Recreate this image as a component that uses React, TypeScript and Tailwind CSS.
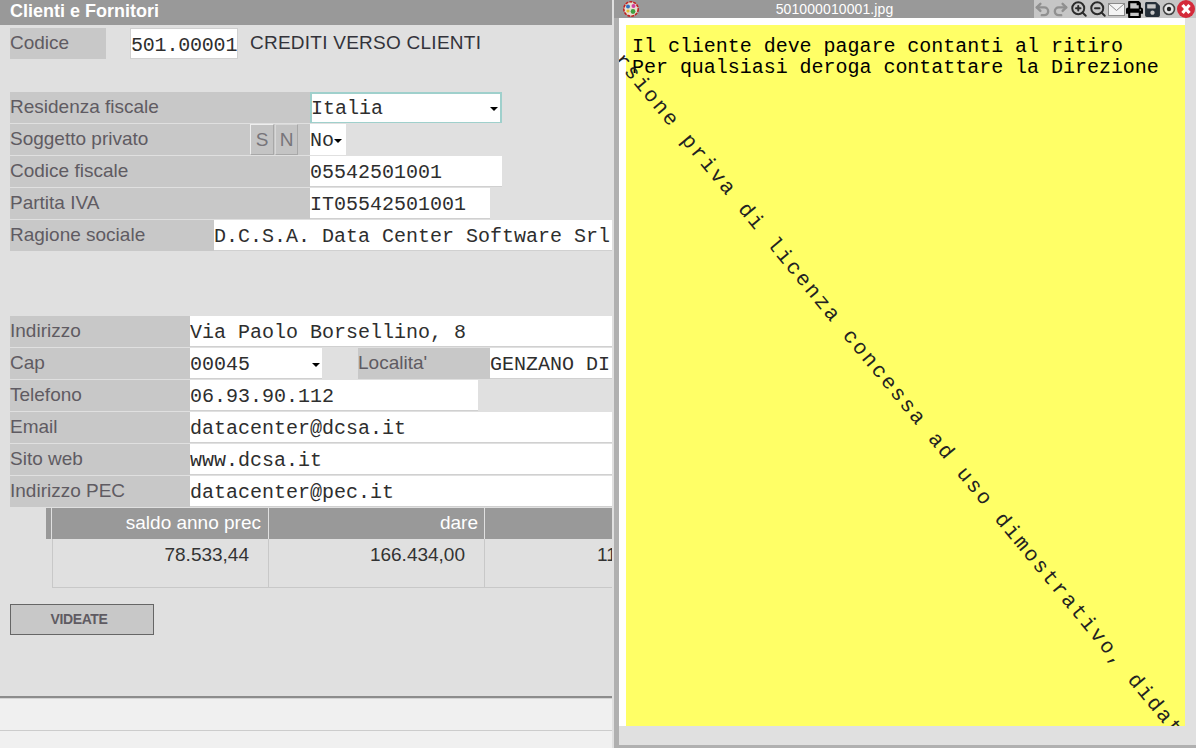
import type { ReactNode } from 'react';
import { Redo2, Undo2, ZoomIn, ZoomOut } from 'lucide-react';
import { FaPrint, FaSave } from 'react-icons/fa';

const mono = "font-['Liberation_Mono',monospace] text-[20px] text-[#2e2e2e]";

function Label({ children, className }: { children?: ReactNode; className: string }) {
  return <div className={`h-[31px] shrink-0 bg-[#c8c8c8] text-[19px] leading-[30px] text-[#5f5b62] ${className}`}>{children}</div>;
}

function Value({ children, className }: { children?: ReactNode; className: string }) {
  return <div className={`h-[31px] shrink-0 overflow-hidden whitespace-nowrap border-b border-[#d0d0d0] bg-white leading-[34px] ${mono} ${className}`}>{children}</div>;
}

function Caret() {
  return <span className="border-x-[4px] border-t-[4px] border-x-transparent border-t-black" />;
}

function Row({ children }: { children: ReactNode }) {
  return <div className="mb-px flex h-[31px] pl-[10px]">{children}</div>;
}

function Logo() {
  return (
    <svg width="18" height="18" viewBox="0 0 18 18">
      <circle cx="9" cy="9" r="7.2" fill="#e8e0d0" stroke="#c02020" strokeWidth="1.6" strokeDasharray="3 1" />
      <circle cx="6" cy="6.5" r="2" fill="#2f6fc0" />
      <circle cx="11.5" cy="6" r="2" fill="#d040a0" />
      <circle cx="11" cy="11.5" r="2.4" fill="#40a040" />
      <circle cx="6" cy="11" r="1.6" fill="#e0c030" />
    </svg>
  );
}

function Toolbar() {
  return (
    <div className="flex h-[18px] w-[162px] items-center justify-between bg-[#c6c6c6] pr-px">
      <Undo2 size={17} strokeWidth={3.4} className="text-[#909090]" />
      <Redo2 size={17} strokeWidth={3.4} className="text-[#909090]" />
      <ZoomIn size={18} strokeWidth={2.6} className="text-[#2c2c2c]" />
      <ZoomOut size={18} strokeWidth={2.6} className="text-[#2c2c2c]" />
      <svg width="17" height="13" viewBox="0 0 17 13">
        <rect x="0.5" y="0.5" width="16" height="12" fill="#f4f4f4" stroke="#8a8a8a" />
        <path d="M1 1l7.5 6.5L16 1" fill="none" stroke="#8a8a8a" />
      </svg>
      <FaPrint size={17} className="text-black" />
      <FaSave size={17} className="text-[#26303a]" />
      <svg width="14" height="14" viewBox="0 0 14 14">
        <circle cx="7" cy="7" r="5.5" fill="#e8e8e8" stroke="#444444" strokeWidth="1.6" />
        <circle cx="7" cy="7" r="2.2" fill="#222222" />
      </svg>
      <svg width="18" height="18" viewBox="0 0 18 18">
        <circle cx="9" cy="9" r="9" fill="#d42a3a" />
        <path d="M5.5 5l7 8M12.5 5l-7 8" stroke="#ffffff" strokeWidth="3.2" />
      </svg>
    </div>
  );
}

export default function App() {
  return (
    <div className="flex h-[748px] w-[1196px] overflow-hidden bg-[#e0e0e0] font-['Liberation_Sans',Arial,sans-serif]">
      <div className="flex w-[614px] shrink-0 flex-col pr-[2px]">
        <div className="h-[25px] bg-[#999999] pl-[10px] text-[18px] font-bold leading-[22px] text-white">Clienti e Fornitori</div>

        <div className="mt-[3px] flex h-[31px] pl-[10px]">
          <Label className="w-[96px]">Codice</Label>
          <Value className="ml-[24px] w-[108px] border border-[#d0d0d0] text-center tracking-[-0.2px]">501.00001</Value>
          <div className="ml-[12px] text-[19px] leading-[30px] tracking-[0.25px] text-[#33333a]">CREDITI VERSO CLIENTI</div>
        </div>

        <div className="mt-[33px]">
          <Row>
            <Label className="w-[300px]">Residenza fiscale</Label>
            <Value className="flex w-[192px] items-center justify-between border-2 border-[#9fd0cc]! pt-px pr-[2px]"><span className="-ml-[1px]">Italia</span><Caret /></Value>
          </Row>
          <Row>
            <Label className="flex w-[300px]">
              <span className="w-[240px]">Soggetto privato</span>
              <span className="h-[31px] w-[24px] border border-[#eeeeee] border-r-[#a8a8a8] border-b-[#a8a8a8] bg-[#c4c4c4] text-center text-[#77757a]">S</span>
              <span className="ml-px h-[31px] w-[23px] border border-[#d8d8d8] border-r-[#a8a8a8] border-b-[#a8a8a8] bg-[#c4c4c4] text-center text-[#77757a]">N</span>
            </Label>
            <Value className="flex w-[36px] items-center border-b-0! pt-[3px]">No<Caret /></Value>
          </Row>
          <Row>
            <Label className="w-[300px]">Codice fiscale</Label>
            <Value className="w-[192px]">05542501001</Value>
          </Row>
          <Row>
            <Label className="w-[300px]">Partita IVA</Label>
            <Value className="w-[180px]">IT05542501001</Value>
          </Row>
          <Row>
            <Label className="w-[204px]">Ragione sociale</Label>
            <Value className="w-[398px]">D.C.S.A. Data Center Software Srl</Value>
          </Row>
        </div>

        <div className="mt-[64px]">
          <Row>
            <Label className="w-[180px]">Indirizzo</Label>
            <Value className="w-[422px]">Via Paolo Borsellino, 8</Value>
          </Row>
          <Row>
            <Label className="w-[180px]">Cap</Label>
            <Value className="flex w-[132px] items-center justify-between pt-[3px] pr-[2px]">00045<Caret /></Value>
            <div className="w-[36px]" />
            <Label className="w-[132px]">Localita'</Label>
            <Value className="w-[122px]">GENZANO DI ROMA</Value>
          </Row>
          <Row>
            <Label className="w-[180px]">Telefono</Label>
            <Value className="w-[288px]">06.93.90.112</Value>
          </Row>
          <Row>
            <Label className="w-[180px]">Email</Label>
            <Value className="w-[422px]">datacenter@dcsa.it</Value>
          </Row>
          <Row>
            <Label className="w-[180px]">Sito web</Label>
            <Value className="w-[422px]">www.dcsa.it</Value>
          </Row>
          <Row>
            <Label className="w-[180px]">Indirizzo PEC</Label>
            <Value className="w-[422px]">datacenter@pec.it</Value>
          </Row>
        </div>

        <div className="overflow-hidden pl-[46px]">
          <div className="flex h-[31px] w-[566px] text-[19px] leading-[30px] text-white">
            <div className="w-[6px] border-r border-[#e0e0e0] bg-[#999999]" />
            <div className="w-[217px] border-r border-[#e0e0e0] bg-[#999999] pr-[7px] text-right">saldo anno prec</div>
            <div className="w-[216px] border-r border-[#e0e0e0] bg-[#999999] pr-[6px] text-right">dare</div>
            <div className="flex-1 bg-[#999999]" />
          </div>
          <div className="ml-[6px] flex h-[49px] w-[560px] border-b border-l border-[#c8c8c8] text-[19px] leading-[32px] text-[#333333]">
            <div className="w-[216px] shrink-0 border-r border-[#c8c8c8] pr-[19px] text-right">78.533,44</div>
            <div className="w-[216px] shrink-0 border-r border-[#c8c8c8] pr-[19px] text-right">166.434,00</div>
            <div className="whitespace-nowrap pl-[112px]">11</div>
          </div>
        </div>

        <button className="ml-[10px] mt-[16px] h-[31px] w-[144px] border border-[#666666] bg-[#c8c8c8] pr-[6px] text-[14px] font-bold tracking-[-0.4px] text-[#5f5b62]">VIDEATE</button>

        <div className="mt-auto h-[52px] border-t-2 border-[#8c8c8c] bg-[#f0f0f0]">
          <div className="h-[33px] border-t border-b border-t-[#d4d4d4] border-b-[#cccccc]" />
        </div>
      </div>

      <div className="flex w-[582px] shrink-0 flex-col border-l-[5px] border-b-[3px] border-[#b0b0b0] bg-[#e0e0e0]">
        <div className="-ml-[5px] flex h-[18px] shrink-0 items-center bg-[#999999]">
          <div className="ml-[5px] flex w-[24px] justify-center"><Logo /></div>
          <div className="flex-1 pr-[8px] text-center text-[14px] tracking-[0.1px] text-white">501000010001.jpg</div>
          <Toolbar />
        </div>
        <div className="relative h-[708px] w-[566px] shrink-0 overflow-hidden bg-white pl-[7px] pt-[7px]">
          <div className="h-[701px] w-[559px] bg-[#ffff66] pl-[6px] pt-[12px] font-['Liberation_Mono',monospace] text-[20px] leading-[20.5px] tracking-[-0.03px] text-black">
            <div>Il cliente deve pagare contanti al ritiro</div>
            <div>Per qualsiasi deroga contattare la Direzione</div>
          </div>
          <div className="absolute left-[-20px] top-0 origin-left rotate-[50.4deg] whitespace-nowrap font-['Liberation_Mono',monospace] text-[21px] tracking-[2.3px] text-[#222222]">
            Versione priva di licenza concessa ad uso dimostrativo, didattico
          </div>
        </div>
      </div>
    </div>
  );
}
